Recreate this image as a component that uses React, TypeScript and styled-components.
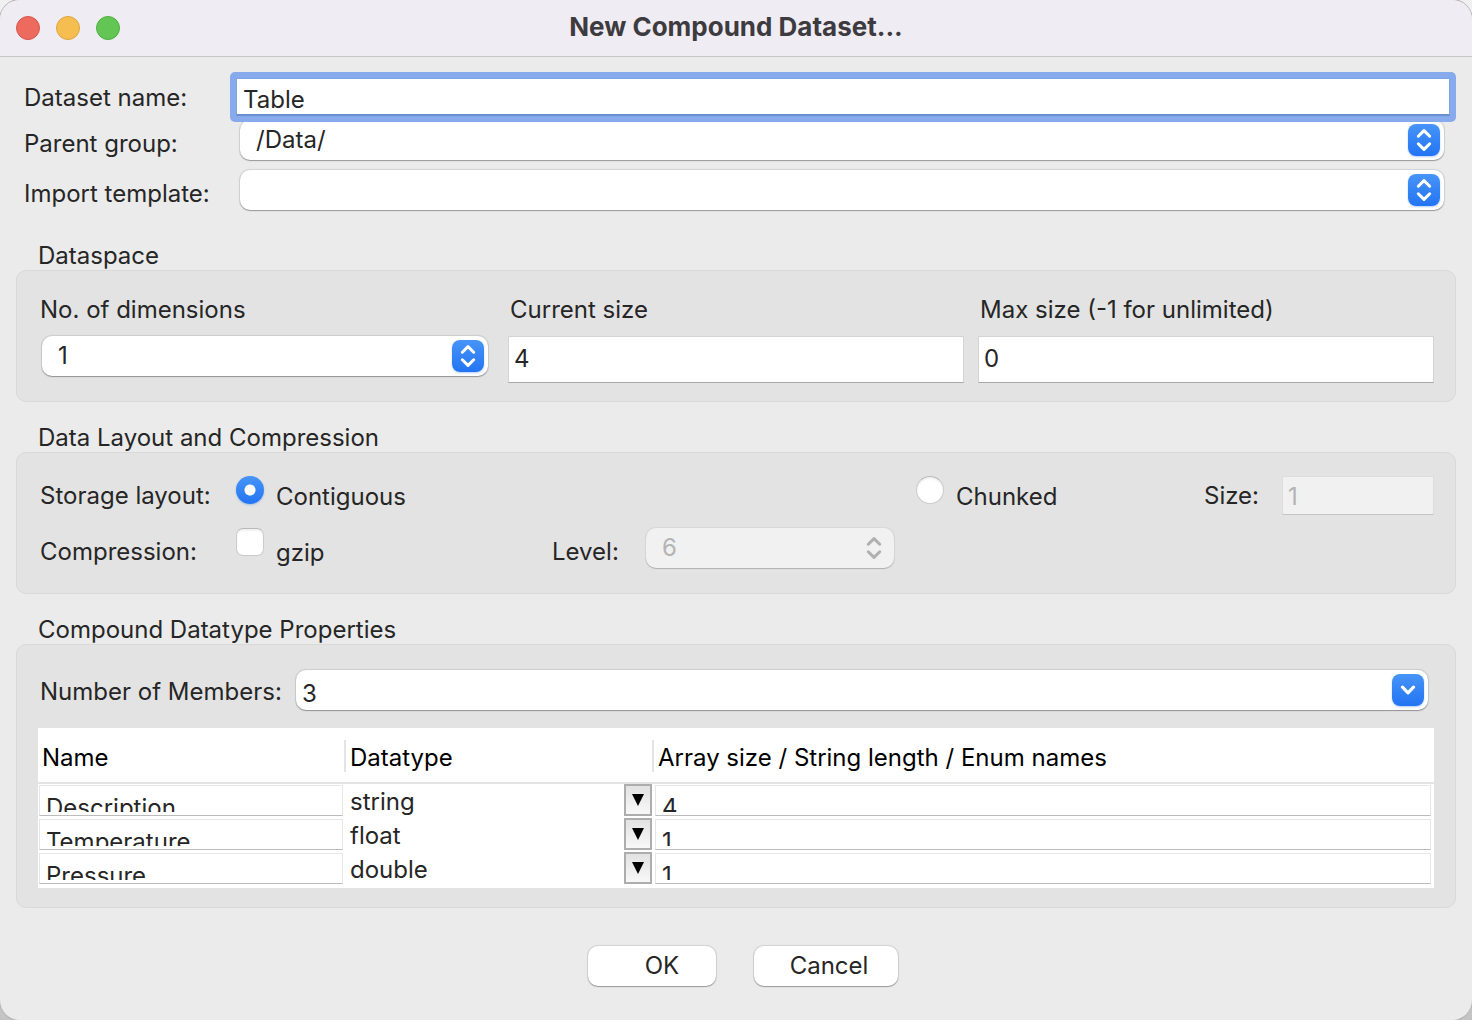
import React, { useState } from 'react';
import styled, { createGlobalStyle, css } from 'styled-components';

const GlobalStyle = createGlobalStyle`
  *, *::before, *::after { box-sizing: border-box; }
  body {
    margin: 0;
    background: linear-gradient(#f0f0f0, #c4c4c4);
  }
  body, input, select, button {
    font-family: Inter, "Liberation Sans", sans-serif;
    font-size: 24px;
    line-height: 28px;
    color: #262626;
  }
`;

const Window = styled.main`
  display: flex;
  flex-direction: column;
  min-height: 100vh;
  overflow: hidden;
  border-radius: 20px;
  background: #ebebeb;
  box-shadow: 0 0 0 1px #b4b4b4;
`;

const TitleBar = styled.header`
  display: grid;
  grid-template-columns: 1fr auto 1fr;
  align-items: center;
  height: 57px;
  padding: 0 16px;
  background: #efecf3;
  border-bottom: 1px solid #c6c5c8;
`;

const Lights = styled.div`
  display: flex;
  gap: 16px;
`;

const Light = styled.button<{ $fill: string; $edge: string }>`
  width: 24px;
  height: 24px;
  padding: 0;
  border: 1px solid ${(p) => p.$edge};
  border-radius: 50%;
  background: ${(p) => p.$fill};
`;

const Title = styled.h1`
  margin: 0;
  padding-bottom: 2px;
  font-size: 26px;
  line-height: 28px;
  font-weight: 700;
  color: #3d3b40;
`;

const TargetForm = styled.div`
  display: grid;
  grid-template-columns: 212px 1fr;
  grid-template-rows: 40px 48px 48px;
  row-gap: 2px;
  align-items: center;
  padding: 21px 22px 24px 24px;
`;

const FieldLabel = styled.label<{ $inset?: boolean }>`
  padding-left: ${(p) => (p.$inset ? 2 : 0)}px;
  white-space: nowrap;
`;

const TextInput = styled.input<{ $size?: 'tall' | 'short' }>`
  align-self: start;
  width: 100%;
  min-width: 0;
  height: ${(p) => (p.$size === 'tall' ? 47 : 39)}px;
  padding: ${(p) => (p.$size === 'tall' ? '0 5px 2px' : '2px 5px 0')};
  border: 1px solid #d4d4d4;
  border-bottom-color: #a9a9a9;
  border-radius: 0;
  background: #fff;
  outline: none;

  &:disabled {
    background: #f1f1f1;
    border-color: #dcdcdc;
    border-bottom-color: #c4c4c4;
    color: #b4b4b4;
    opacity: 1;
  }
`;

const FocusedInput = styled.input`
  align-self: start;
  z-index: 1;
  width: 100%;
  min-width: 0;
  height: 38px;
  padding: 5px 6px 0;
  border: 1px solid #7fa4e6;
  border-bottom: 2px solid #6a90d4;
  border-radius: 0;
  background: #fff;
  outline: none;
  box-shadow: 0 0 0 6px #86aaec;
  clip-path: inset(-6px round 5px);
`;

const raised = css`
  border-radius: 10px;
  background: #fff;
  box-shadow: 0 0 1px 1px rgba(0, 0, 0, 0.1), 0 1px 1px rgba(0, 0, 0, 0.28);
`;

const PopupFrame = styled.div<{ $disabled?: boolean }>`
  ${raised}
  display: grid;
  grid-template-columns: 1fr;
  align-items: center;
  align-self: start;
  height: 40px;
  margin: 0 6px 0 4px;
  ${(p) =>
    p.$disabled &&
    css`
      background: #f1f1f1;
      box-shadow: 0 0 1px 1px rgba(0, 0, 0, 0.05), 0 1px 1px rgba(0, 0, 0, 0.18);
    `}
`;

const PopupSelect = styled.select`
  grid-area: 1 / 1;
  appearance: none;
  width: 100%;
  height: 40px;
  padding: 0 40px 0 16px;
  border: 0;
  border-radius: 10px;
  background: transparent;
  outline: none;

  &:disabled {
    color: #b4b4b4;
    opacity: 1;
  }
`;

const Knob = styled.span<{ $disabled?: boolean }>`
  grid-area: 1 / 1;
  justify-self: end;
  display: grid;
  place-items: center;
  width: 32px;
  height: 32px;
  margin-right: 4px;
  border-radius: 8px;
  color: #fff;
  background: linear-gradient(#4794f8, #2374f3);
  box-shadow: 0 1px 2px rgba(35, 116, 243, 0.35);
  pointer-events: none;
  ${(p) => p.$disabled && 'background: none; box-shadow: none; color: #b0b0b0;'}
`;

const Group = styled.fieldset`
  min-width: 0;
  margin: 0 16px 22px;
  padding: 0;
  border: 0;
`;

const GroupTitle = styled.legend`
  padding: 0 0 0 22px;
`;

const GroupBox = styled.div<{ $bottom: number }>`
  padding: 23px 21px ${(p) => p.$bottom}px;
  border: 1px solid #d9d9d9;
  border-radius: 10px;
  background: #e3e3e3;
`;

const Dimensions = styled.div`
  display: grid;
  grid-template-columns: repeat(3, 1fr);
  column-gap: 14px;
  height: 89px;
`;

const StackedField = styled.div`
  display: flex;
  flex-direction: column;
  gap: 12px;
  padding-top: 2px;
`;

const Storage = styled.div`
  display: grid;
  grid-template-columns: 198px 316fr 90px 274fr 288fr 78px 152fr;
  grid-template-rows: 40px 48px;
  row-gap: 12px;
  align-items: center;
`;

const Choice = styled.div<{ $span?: number }>`
  display: flex;
  align-self: stretch;
  align-items: center;
  gap: 12px;
  grid-column: span ${(p) => p.$span ?? 1};
`;

const ChoiceLabel = styled.label`
  padding-top: 2px;
`;

const mark = css`
  appearance: none;
  align-self: start;
  width: 28px;
  height: 28px;
  margin: 0;
  border: 1px solid #cbcbcb;
  border-top-color: #b9b9b9;
  background: #fff;
  box-shadow: inset 0 2px 2px rgba(0, 0, 0, 0.06);
  outline: none;
`;

const Radio = styled.input`
  ${mark}
  border-radius: 50%;

  &:checked {
    border: 0;
    background: radial-gradient(circle, #fff 5px, transparent 6px),
      linear-gradient(#4794f8, #2374f3);
    box-shadow: 0 1px 2px rgba(35, 116, 243, 0.35);
  }
`;

const Checkbox = styled.input`
  ${mark}
  border-radius: 7px;

  &:checked {
    background: #2f7ff5;
  }
`;

const LevelSlot = styled.div`
  align-self: stretch;
  padding-right: 16px;
`;

const MembersRow = styled.div`
  display: grid;
  grid-template-columns: 254px 1fr;
  align-items: center;
  height: 44px;
  margin: 2px 0 14px;
`;

const ComboInput = styled.input`
  grid-area: 1 / 1;
  width: 100%;
  height: 40px;
  padding: 6px 40px 0 6px;
  border: 0;
  border-radius: 10px;
  background: transparent;
  outline: none;
`;

const MemberTable = styled.table`
  width: 100%;
  table-layout: fixed;
  border-collapse: separate;
  border-spacing: 0;
  border-bottom: 2px solid #fff;
  background: #fff;
`;

const HeadCell = styled.th<{ $width?: number }>`
  width: ${(p) => (p.$width ? `${p.$width}px` : 'auto')};
  height: 56px;
  padding: 2px 0 0;
  border-bottom: 2px solid #e4e4e4;
  font-weight: 400;
  color: #000;
  text-align: left;
  white-space: nowrap;
`;

const HeadText = styled.div<{ $divided?: boolean }>`
  height: 32px;
  padding-left: 4px;
  line-height: 36px;
  border-right: ${(p) => (p.$divided ? '2px solid #e4e4e4' : '0')};
`;

const Cell = styled.td<{ $right?: number }>`
  height: 34px;
  padding: 0 ${(p) => p.$right ?? 3}px 0 1px;
  vertical-align: top;
`;

const CellFrame = styled.div`
  height: 31px;
  margin-top: 1px;
  padding: 8px 6px 3px;
  border: 1px solid #e6e6e6;
  border-bottom: 1px solid #bcbcbc;
  overflow: clip;
  overflow-clip-margin: content-box;
`;

const CellInput = styled.input`
  display: block;
  width: 100%;
  height: 28px;
  padding: 0;
  border: 0;
  background: transparent;
  outline: none;
`;

const TypeFrame = styled.div`
  display: grid;
  grid-template-columns: 1fr;
  height: 32px;
`;

const TypeSelect = styled.select`
  grid-area: 1 / 1;
  appearance: none;
  height: 34px;
  padding: 2px 28px 0 3px;
  border: 0;
  background: transparent;
  outline: none;
`;

const TypeArrow = styled.span`
  grid-area: 1 / 1;
  justify-self: end;
  display: grid;
  place-items: center;
  width: 28px;
  height: 32px;
  border: 2px solid #adadad;
  background: linear-gradient(#e2e2e2, #f8f8f8);
  pointer-events: none;
`;

const Actions = styled.footer`
  display: flex;
  justify-content: center;
  gap: 38px;
  padding: 16px 0 34px 14px;
`;

const PushButton = styled.button<{ $width: number; $lead: number }>`
  ${raised}
  width: ${(p) => p.$width}px;
  height: 40px;
  padding: 0 0 0 ${(p) => p.$lead}px;
  border: 0;
`;

const UpDown = () => (
  <svg width="16" height="24" viewBox="0 0 16 24" fill="none" stroke="currentColor" strokeWidth="3" strokeLinecap="round" strokeLinejoin="round" aria-hidden="true">
    <path d="M2.3 8.2 L8 2.6 L13.7 8.2" />
    <path d="M2.3 15.8 L8 21.4 L13.7 15.8" />
  </svg>
);

const Down = () => (
  <svg width="16" height="10" viewBox="0 0 16 10" fill="none" stroke="currentColor" strokeWidth="3.2" strokeLinecap="round" strokeLinejoin="round" aria-hidden="true">
    <path d="M2.5 2.2 L8 7.8 L13.5 2.2" />
  </svg>
);

const Triangle = () => (
  <svg width="12" height="12" viewBox="0 0 12 12" aria-hidden="true">
    <path d="M0 0 H12 L6 12 Z" fill="#000" />
  </svg>
);

interface PopupProps {
  id: string;
  options: string[];
  value?: string;
  disabled?: boolean;
}

const Popup = ({ id, options, value, disabled }: PopupProps) => (
  <PopupFrame $disabled={disabled}>
    <PopupSelect id={id} defaultValue={value} disabled={disabled}>
      {options.map((o) => (
        <option key={o}>{o}</option>
      ))}
    </PopupSelect>
    <Knob $disabled={disabled}>
      <UpDown />
    </Knob>
  </PopupFrame>
);

const members = [
  { name: 'Description', type: 'string', size: '4' },
  { name: 'Temperature', type: 'float', size: '1' },
  { name: 'Pressure', type: 'double', size: '1' },
];

export default function App() {
  const [layout, setLayout] = useState('contiguous');

  return (
    <>
      <GlobalStyle />
      <Window>
        <TitleBar>
          <Lights>
            <Light aria-label="Close" $fill="#ed6a5f" $edge="#d8564b" />
            <Light aria-label="Minimize" $fill="#f6be50" $edge="#dba63c" />
            <Light aria-label="Zoom" $fill="#62c554" $edge="#4faf41" />
          </Lights>
          <Title>New Compound Dataset...</Title>
        </TitleBar>

        <TargetForm>
          <FieldLabel htmlFor="name">Dataset name:</FieldLabel>
          <FocusedInput id="name" defaultValue="Table" />
          <FieldLabel htmlFor="parent">Parent group:</FieldLabel>
          <Popup id="parent" options={['/Data/']} />
          <FieldLabel htmlFor="template">Import template:</FieldLabel>
          <Popup id="template" options={['']} />
        </TargetForm>

        <Group>
          <GroupTitle>Dataspace</GroupTitle>
          <GroupBox $bottom={18}>
            <Dimensions>
              <StackedField>
                <FieldLabel $inset htmlFor="rank">No. of dimensions</FieldLabel>
                <div>
                  <Popup id="rank" options={['1']} />
                </div>
              </StackedField>
              <StackedField>
                <FieldLabel $inset htmlFor="current">Current size</FieldLabel>
                <TextInput id="current" $size="tall" defaultValue="4" />
              </StackedField>
              <StackedField>
                <FieldLabel $inset htmlFor="max">Max size (-1 for unlimited)</FieldLabel>
                <TextInput id="max" $size="tall" defaultValue="0" />
              </StackedField>
            </Dimensions>
          </GroupBox>
        </Group>

        <Group>
          <GroupTitle>Data Layout and Compression</GroupTitle>
          <GroupBox $bottom={17}>
            <Storage>
              <FieldLabel as="span" $inset>Storage layout:</FieldLabel>
              <Choice $span={3}>
                <Radio
                  type="radio"
                  name="layout"
                  id="contiguous"
                  checked={layout === 'contiguous'}
                  onChange={() => setLayout('contiguous')}
                />
                <ChoiceLabel htmlFor="contiguous">Contiguous</ChoiceLabel>
              </Choice>
              <Choice>
                <Radio
                  type="radio"
                  name="layout"
                  id="chunked"
                  checked={layout === 'chunked'}
                  onChange={() => setLayout('chunked')}
                />
                <ChoiceLabel htmlFor="chunked">Chunked</ChoiceLabel>
              </Choice>
              <FieldLabel htmlFor="chunk">Size:</FieldLabel>
              <TextInput id="chunk" defaultValue="1" disabled={layout !== 'chunked'} />

              <FieldLabel as="span" $inset>Compression:</FieldLabel>
              <Choice>
                <Checkbox type="checkbox" id="gzip" />
                <ChoiceLabel htmlFor="gzip">gzip</ChoiceLabel>
              </Choice>
              <FieldLabel htmlFor="level">Level:</FieldLabel>
              <LevelSlot>
                <Popup id="level" options={['6']} disabled />
              </LevelSlot>
            </Storage>
          </GroupBox>
        </Group>

        <Group>
          <GroupTitle>Compound Datatype Properties</GroupTitle>
          <GroupBox $bottom={19}>
            <MembersRow>
              <FieldLabel $inset htmlFor="count">Number of Members:</FieldLabel>
              <PopupFrame>
                <ComboInput id="count" defaultValue="3" />
                <Knob>
                  <Down />
                </Knob>
              </PopupFrame>
            </MembersRow>
            <MemberTable>
              <thead>
                <tr>
                  <HeadCell $width={308}>
                    <HeadText $divided>Name</HeadText>
                  </HeadCell>
                  <HeadCell $width={308}>
                    <HeadText $divided>Datatype</HeadText>
                  </HeadCell>
                  <HeadCell>
                    <HeadText>Array size / String length / Enum names</HeadText>
                  </HeadCell>
                </tr>
              </thead>
              <tbody>
                {members.map((m) => (
                  <tr key={m.name}>
                    <Cell>
                      <CellFrame>
                        <CellInput aria-label="Name" defaultValue={m.name} />
                      </CellFrame>
                    </Cell>
                    <Cell $right={2}>
                      <TypeFrame>
                        <TypeSelect aria-label="Datatype" defaultValue={m.type}>
                          <option>string</option>
                          <option>float</option>
                          <option>double</option>
                        </TypeSelect>
                        <TypeArrow>
                          <Triangle />
                        </TypeArrow>
                      </TypeFrame>
                    </Cell>
                    <Cell>
                      <CellFrame>
                        <CellInput aria-label="Size" defaultValue={m.size} />
                      </CellFrame>
                    </Cell>
                  </tr>
                ))}
              </tbody>
            </MemberTable>
          </GroupBox>
        </Group>

        <Actions>
          <PushButton type="button" $width={128} $lead={20}>OK</PushButton>
          <PushButton type="button" $width={144} $lead={6}>Cancel</PushButton>
        </Actions>
      </Window>
    </>
  );
}
